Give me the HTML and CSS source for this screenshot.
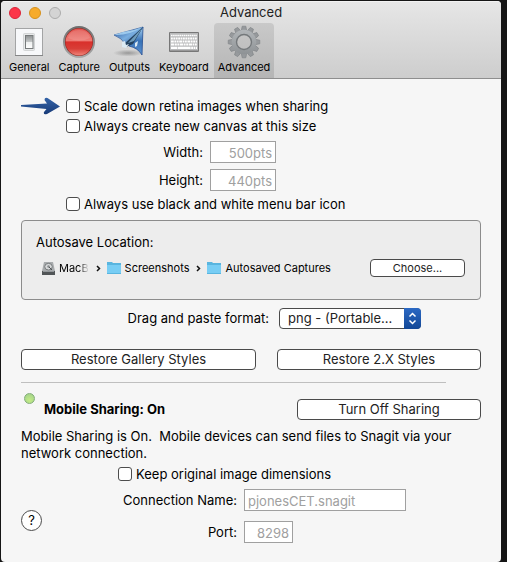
FILE: index.html
```html
<!DOCTYPE html>
<html lang="en">
<head>
<meta charset="utf-8">
<meta name="viewport" content="width=device-width, initial-scale=1">
<title>Advanced</title>
<link rel="stylesheet" href="styles.css">
</head>
<body>
<div class="window">
  <header class="toolbar">
    <div class="titlebar">
      <div class="lights">
        <span class="light light-close"></span>
        <span class="light light-minimize"></span>
        <span class="light light-zoom"></span>
      </div>
      <h1 class="title">Advanced</h1>
    </div>
    <nav class="tabs">
      <button class="tab" type="button">
        <svg class="tab-icon" viewBox="0 0 36 36" aria-hidden="true">
          <defs>
            <linearGradient id="switch" x1="0" y1="0" x2="0" y2="1"><stop offset="0" stop-color="#8d9192"/><stop offset=".48" stop-color="#c4c7c8"/><stop offset=".52" stop-color="#eef0f0"/><stop offset="1" stop-color="#fff"/></linearGradient>
          </defs>
          <rect x="4.500" y="4.500" width="27" height="27" fill="#f7f8fa" stroke="#a3a4a5"/>
          <path d="M4 31.500h28" stroke="#858687"/>
          <rect x="12.500" y="9.500" width="11" height="17" rx="1" fill="#e7e9ea" stroke="#d3d5d6"/>
          <rect x="14.500" y="11.500" width="7.500" height="13" fill="url(#switch)" stroke="#777b7c"/>
        </svg>
        <span>General</span>
      </button>
      <button class="tab" type="button">
        <svg class="tab-icon" viewBox="0 0 36 36" aria-hidden="true">
          <defs>
            <linearGradient id="red" x1="0" y1="0" x2="0" y2="1"><stop offset="0" stop-color="#e0544e"/><stop offset=".45" stop-color="#ee7c75"/><stop offset=".5" stop-color="#d9302b"/><stop offset=".75" stop-color="#d83e37"/><stop offset="1" stop-color="#f0857a"/></linearGradient>
            <linearGradient id="ring" x1="0" y1="0" x2="0" y2="1"><stop offset="0" stop-color="#6e6e6e"/><stop offset="1" stop-color="#a9a9a9"/></linearGradient>
          </defs>
          <circle cx="18" cy="18" r="15" fill="#8f2420" stroke="url(#ring)" stroke-width="2"/>
          <circle cx="18" cy="18" r="13.500" fill="url(#red)"/>
          <path d="M7 14Q9 6 18 6t11 8q-11 5-22 0z" fill="#fff" opacity=".13"/>
        </svg>
        <span>Capture</span>
      </button>
      <button class="tab" type="button">
        <svg class="tab-icon" viewBox="0 0 36 36" aria-hidden="true">
          <defs>
            <linearGradient id="wing" x1="0" y1="0" x2="1" y2="1"><stop offset="0" stop-color="#254f98"/><stop offset=".5" stop-color="#79aee0"/><stop offset="1" stop-color="#254985"/></linearGradient>
            <linearGradient id="fin" x1="0" y1="0" x2="0" y2="1"><stop offset="0" stop-color="#a9d3f2"/><stop offset=".5" stop-color="#3872b6"/><stop offset="1" stop-color="#5c93d2"/></linearGradient>
            <radialGradient id="shade"><stop offset="0" stop-color="#777" stop-opacity=".65"/><stop offset="1" stop-color="#777" stop-opacity="0"/></radialGradient>
          </defs>
          <ellipse cx="17" cy="29" rx="15" ry="3.500" fill="url(#shade)"/>
          <path d="M3 11L32 3L15 21Q11 14 3 11z" fill="url(#wing)" stroke="#315a9b" stroke-width=".7"/>
          <path d="M3 11Q17 12 32 3Q22 7 12 8z" fill="#9cc9ed"/>
          <path d="M32 3L31 31Q27 24 18 22z" fill="url(#fin)" stroke="#234d90" stroke-width=".8"/>
          <path d="M32 3L13 20l2 3 7-3z" fill="#23415f"/>
          <path d="M32 3L17 19l6-2z" fill="#6e9cbc"/>
          <path d="M11 18l3-1 1 4 3-1-3 4-4-1zM24 19l3-2-1 5-2 1z" fill="#dceaf3"/>
        </svg>
        <span>Outputs</span>
      </button>
      <button class="tab" type="button">
        <svg class="tab-icon" viewBox="0 0 36 36" aria-hidden="true">
          <rect x="3" y="8" width="30" height="20" rx="1" fill="#777"/>
          <rect x="4" y="9" width="28" height="17.500" fill="#b9babb"/>
          <g stroke="#fff" stroke-width="2.200">
            <path d="M5 11.500h26" stroke-width="1.500" stroke-dasharray="1.600 .500"/>
            <path d="M5 14.500h26" stroke-dasharray="1.800 .600"/>
            <path d="M5 17.500h26" stroke-dasharray="2.800 .600 1.800 .600 1.800 .600"/>
            <path d="M5 20.500h26" stroke-dasharray="3.400 .600 1.800 .600 1.800 .600"/>
            <path d="M5 23.800h6m.6 0h13m.6 0h1.800m.6 0h1.800m.6 0h1"/>
          </g>
        </svg>
        <span>Keyboard</span>
      </button>
      <button class="tab tab-active" type="button" aria-current="page">
        <svg class="tab-icon" viewBox="0 0 36 36" aria-hidden="true">
          <defs>
            <linearGradient id="gear" gradientUnits="userSpaceOnUse" x1="0" y1="5" x2="0" y2="31"><stop offset="0" stop-color="#b3b7ba"/><stop offset="1" stop-color="#8d9194"/></linearGradient>
            <path id="tooth" d="M15.200 7l1-4.800h3.600l1 4.800z"/>
          </defs>
          <g fill="#96999c" stroke="#7d8184" stroke-width=".6">
            <use href="#tooth"/><use href="#tooth" transform="rotate(30 18 18)"/><use href="#tooth" transform="rotate(60 18 18)"/><use href="#tooth" transform="rotate(90 18 18)"/><use href="#tooth" transform="rotate(120 18 18)"/><use href="#tooth" transform="rotate(150 18 18)"/><use href="#tooth" transform="rotate(180 18 18)"/><use href="#tooth" transform="rotate(210 18 18)"/><use href="#tooth" transform="rotate(240 18 18)"/><use href="#tooth" transform="rotate(270 18 18)"/><use href="#tooth" transform="rotate(300 18 18)"/><use href="#tooth" transform="rotate(330 18 18)"/>
          </g>
          <circle cx="18" cy="18" r="10" fill="none" stroke="url(#gear)" stroke-width="4.600"/>
          <circle cx="18" cy="18" r="7.500" fill="none" stroke="#74787b" stroke-width="1.400"/>
        </svg>
        <span>Advanced</span>
      </button>
    </nav>
  </header>

  <main class="content">
    <section class="options">
      <svg class="arrow" viewBox="0 0 40 18" aria-hidden="true">
        <defs><linearGradient id="arrow" x1="0" y1="0" x2="0" y2="1"><stop offset="0" stop-color="#3463a8"/><stop offset="1" stop-color="#173a77"/></linearGradient></defs>
        <path d="M0 8L26 6.500L23.500 3q0-3 3-2L39 9.500L26 17q-4 1-3-2l2.500-3L0 9.500Q-1 9 0 8z" fill="url(#arrow)"/>
      </svg>
      <label class="check"><input type="checkbox">Scale down retina images when sharing</label>
      <label class="check"><input type="checkbox">Always create new canvas at this size</label>
      <div class="sizes">
        <label for="width">Width:</label>
        <input class="field field-number" id="width" type="text" value="500pts" disabled>
        <label for="height">Height:</label>
        <input class="field field-number" id="height" type="text" value="440pts" disabled>
      </div>
      <label class="check"><input type="checkbox">Always use black and white menu bar icon</label>
    </section>

    <section class="autosave">
      <h2 class="autosave-title">Autosave Location:</h2>
      <div class="autosave-row">
        <ol class="path">
          <li>
            <svg class="drive" viewBox="0 0 13 13" aria-hidden="true">
              <path d="M2 0h9l2 9v4H0V9z" fill="#a8abad"/><path d="M0 9h13v4H0z" fill="#515557"/><path d="M1 9h11v1H1z" fill="#93979a"/>
              <ellipse cx="6.500" cy="4.700" rx="3.800" ry="3.300" fill="#d7d9da" stroke="#777b7d"/><circle cx="6.500" cy="4.500" r="1.200" fill="#85898b"/><path d="M7 5l3 3" stroke="#505456"/>
            </svg>
            <span class="faded">MacB</span>
          </li>
          <li>
            <svg class="chevron" viewBox="0 0 5 7" aria-hidden="true"><path d="M1 1l2.500 2.500L1 6"/></svg>
            <svg class="folder" viewBox="0 0 14 12" aria-hidden="true"><path d="M0 0h5l1 1h8v11H0z" fill="#59b5df"/><path d="M0 3h14v8H0z" fill="#77cdf4"/></svg>
            <span>Screenshots</span>
          </li>
          <li>
            <svg class="chevron" viewBox="0 0 5 7" aria-hidden="true"><path d="M1 1l2.500 2.500L1 6"/></svg>
            <svg class="folder" viewBox="0 0 14 12" aria-hidden="true"><path d="M0 0h5l1 1h8v11H0z" fill="#59b5df"/><path d="M0 3h14v8H0z" fill="#77cdf4"/></svg>
            <span>Autosaved Captures</span>
          </li>
        </ol>
        <button class="button button-small" type="button">Choose...</button>
      </div>
    </section>

    <div class="format">
      <label for="format">Drag and paste format:</label>
      <div class="select">
        <select id="format"><option>png - (Portable...</option></select>
        <svg class="select-cap" viewBox="0 0 17 21" aria-hidden="true"><path d="M5.500 8.500l3-3 3 3M5.500 12.500l3 3 3-3"/></svg>
      </div>
    </div>

    <div class="restore">
      <button class="button" type="button">Restore Gallery Styles</button>
      <button class="button" type="button">Restore 2.X Styles</button>
    </div>

    <hr class="divider">

    <section class="sharing">
      <div class="sharing-head">
        <span class="status"></span>
        <h2 class="sharing-title">Mobile Sharing: On</h2>
        <button class="button" type="button">Turn Off Sharing</button>
      </div>
      <p class="sharing-text">Mobile Sharing is On.&nbsp; Mobile devices can send files to Snagit via your network connection.</p>
      <div class="connection">
        <button class="help" type="button" aria-label="Help">?</button>
        <div class="connection-form">
          <label class="check"><input type="checkbox">Keep original image dimensions</label>
          <label class="name-label" for="name">Connection Name:</label>
          <input class="field" id="name" type="text" value="pjonesCET.snagit" disabled>
          <label class="name-label" for="port">Port:</label>
          <input class="field field-port" id="port" type="text" value="8298" disabled>
        </div>
      </div>
    </section>
  </main>
</div>
</body>
</html>
```
FILE: styles.css
```css
* {
  box-sizing: border-box;
}

body {
  display: flex;
  min-height: 100vh;
  margin: 0;
  padding: 1px 6px 0 1px;
  background: #151515;
  color: #000;
  font: 13px/17px Inter, "Liberation Sans", sans-serif;
}

button,
input,
select {
  margin: 0;
  color: inherit;
  font: inherit;
}

h1,
h2,
p,
ol {
  margin: 0;
  padding: 0;
  font-size: inherit;
  font-weight: inherit;
}

.window {
  flex: 1;
  min-width: 0;
  overflow: hidden;
  border-radius: 4px;
  background: #f6f6f6;
}

.toolbar {
  border-top: 1px solid #f2f2f2;
  border-bottom: 1px solid #8e8e8e;
  background: linear-gradient(#e6e6e6, #cdcdcd);
}

.titlebar {
  display: grid;
  grid-template-columns: 1fr auto 1fr;
  align-items: center;
  height: 21px;
  padding: 0 8px;
}

.lights {
  display: flex;
  gap: 8px;
}

.light {
  width: 12px;
  height: 12px;
  border: 1px solid;
  border-radius: 50%;
}

.light-close {
  border-color: #db2438;
  background: #fc3549;
}

.light-minimize {
  border-color: #d6911d;
  background: #f6ab2b;
}

.light-zoom {
  border-color: #acacac;
  background: #d4d4d4;
}

.title {
  color: #222;
}

.tabs {
  display: flex;
  gap: 1px;
  padding: 0 4px;
}

.tab {
  display: flex;
  flex-direction: column;
  align-items: center;
  height: 55px;
  padding: 1px 4px 0;
  border: 0;
  border-radius: 4px 4px 0 0;
  background: none;
  font-size: 11px;
  line-height: 15px;
}

.tab-active {
  background: linear-gradient(#c9c9c9, #b5b5b5);
}

.tab-icon {
  width: 36px;
  height: 36px;
}

.content {
  padding: 17px 20px;
}

.options {
  display: grid;
  grid-template-columns: 45px 1fr;
}

.options > .check,
.sizes {
  grid-column: 2;
}

.arrow {
  width: 40px;
  height: 18px;
  align-self: center;
}

.check {
  display: flex;
  align-items: center;
  gap: 4px;
  height: 20px;
}

.check input {
  width: 14px;
  height: 14px;
  appearance: none;
  border: 1px solid #4d4d4d;
  border-radius: 3px;
  background: #fff;
}

.sizes {
  display: grid;
  grid-template-columns: 137px 66px;
  gap: 6px 7px;
  align-items: center;
  margin: 5px 0 3px;
}

.sizes label,
.name-label {
  text-align: right;
}

.field {
  width: 100%;
  height: 22px;
  padding: 2px 3px 0;
  border: 1px solid #a0a0a0;
  border-radius: 0;
  background: #fff;
  color: #a0a0a0;
}

.field-number {
  text-align: right;
}

.autosave {
  height: 80px;
  margin-top: 6px;
  padding: 13px 15px 0 14px;
  border: 1px solid #8c8c8c;
  border-radius: 4px;
  background: #ededed;
}

.autosave-row {
  display: flex;
  justify-content: space-between;
  align-items: center;
  margin-top: 8px;
}

.path {
  display: flex;
  gap: 7px;
  padding-left: 6px;
  font-size: 11px;
  list-style: none;
}

.path li {
  display: flex;
  align-items: center;
  gap: 4px;
}

.faded {
  -webkit-mask-image: linear-gradient(90deg, #000 65%, transparent);
  mask-image: linear-gradient(90deg, #000 65%, transparent);
}

.drive {
  width: 13px;
  height: 13px;
}

.folder {
  width: 14px;
  height: 12px;
}

.chevron {
  width: 5px;
  height: 7px;
  margin-right: 2px;
  fill: none;
  stroke: #111;
  stroke-width: 1.5;
}

.button {
  height: 21px;
  padding: 0 8px;
  border: 1px solid #4a4a4a;
  border-radius: 4px;
  background: #fff;
  color: #222;
}

.button-small {
  width: 95px;
  height: 18px;
  font-size: 11px;
  line-height: 16px;
}

.format {
  display: flex;
  justify-content: flex-end;
  align-items: center;
  gap: 10px;
  margin-top: 8px;
  padding-right: 60px;
}

.select {
  position: relative;
  width: 142px;
  height: 21px;
}

.select select {
  width: 100%;
  height: 100%;
  padding: 0 20px 0 8px;
  appearance: none;
  border: 1px solid #4a4a4a;
  border-radius: 4px;
  background: #fff;
  color: #222;
}

.select-cap {
  position: absolute;
  top: 0;
  right: 0;
  width: 17px;
  height: 21px;
  border-radius: 0 4px 4px 0;
  background: linear-gradient(#2b69c4, #124796);
  fill: none;
  stroke: #fff;
  stroke-width: 1.5;
  pointer-events: none;
}

.restore {
  display: grid;
  grid-template-columns: 235fr 204fr;
  gap: 21px;
  margin-top: 20px;
}

.divider {
  height: 1px;
  margin: 12px 35px 0 0;
  border: 0;
  background: #bfbfbf;
}

.sharing-head {
  display: grid;
  grid-template-columns: 17px 1fr 184px;
  gap: 6px;
  align-items: end;
  height: 37px;
}

.status {
  align-self: start;
  width: 11px;
  height: 11px;
  margin: 10px 0 0 3px;
  border: 1px solid #83ad79;
  border-radius: 50%;
  background: radial-gradient(circle at 50% 70%, #c4ec86, #9fd08b);
}

.sharing-title {
  margin-bottom: 2px;
  font-weight: 700;
}

.sharing-text {
  margin: 8px 0 2px;
}

.connection {
  display: grid;
  grid-template-columns: 21px 1fr;
  gap: 76px;
}

.help {
  align-self: end;
  width: 21px;
  height: 21px;
  margin-bottom: 12px;
  padding: 0;
  border: 1px solid #4a4a4a;
  border-radius: 50%;
  background: #fff;
}

.connection-form {
  display: grid;
  grid-template-columns: 119px 162px;
  gap: 10px 7px;
  align-items: center;
}

.connection-form .check {
  grid-column: 1 / -1;
  margin-bottom: -5px;
}

.field-port {
  width: 49px;
  text-align: right;
}
```
